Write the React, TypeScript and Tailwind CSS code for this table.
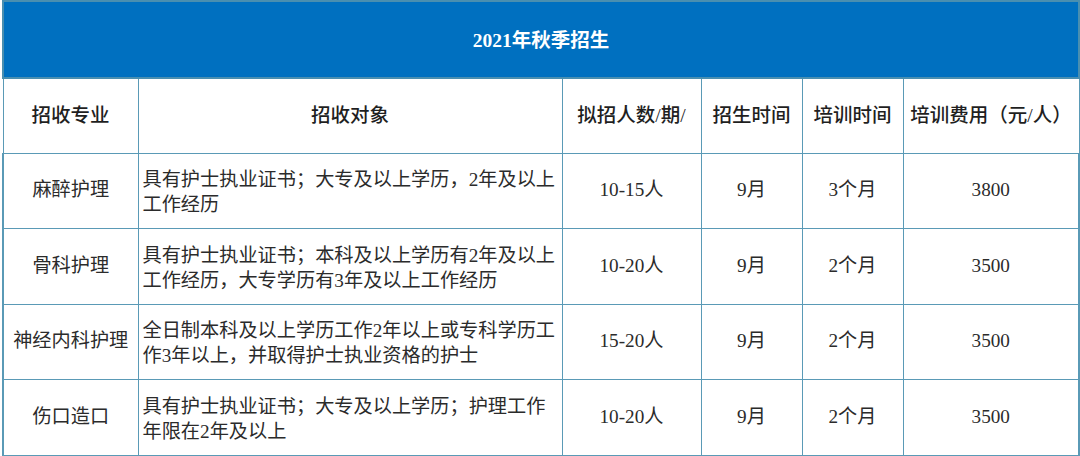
const rows = [
  {
    major: '麻醉护理',
    target: '具有护士执业证书；大专及以上学历，2年及以上工作经历',
    count: '10-15人',
    start: '9月',
    duration: '3个月',
    fee: '3800',
  },
  {
    major: '骨科护理',
    target: '具有护士执业证书；本科及以上学历有2年及以上工作经历，大专学历有3年及以上工作经历',
    count: '10-20人',
    start: '9月',
    duration: '2个月',
    fee: '3500',
  },
  {
    major: '神经内科护理',
    target: '全日制本科及以上学历工作2年以上或专科学历工作3年以上，并取得护士执业资格的护士',
    count: '15-20人',
    start: '9月',
    duration: '2个月',
    fee: '3500',
  },
  {
    major: '伤口造口',
    target: '具有护士执业证书；大专及以上学历；护理工作年限在2年及以上',
    count: '10-20人',
    start: '9月',
    duration: '2个月',
    fee: '3500',
  },
]

const headers = ['招收专业', '招收对象', '拟招人数/期/', '招生时间', '培训时间', '培训费用（元/人）']

export default function App() {
  return (
    <div className="w-[1080px] h-[456px] bg-white pl-[2px] pr-[2px] font-['Liberation_Serif','Noto_Sans_CJK_SC',serif] text-[19.2px] text-[#2b2b2b]">
      <table className="w-[1076px] table-fixed border-collapse">
        <colgroup>
          <col className="w-[135px]" />
          <col className="w-[424px]" />
          <col className="w-[139px]" />
          <col className="w-[101px]" />
          <col className="w-[101px]" />
          <col className="w-[176px]" />
        </colgroup>
        <thead>
          <tr className="h-[77px]">
            <th colSpan={6} className="bg-[#0070c0] border-2 border-[#4a8fb0] text-white font-bold text-[19.5px] align-middle pt-[2px]">
              2021年秋季招生
            </th>
          </tr>
          <tr className="h-[75px]">
            {headers.map((h) => (
              <th key={h} className="border border-[#5a9ab6] font-medium text-[19.5px] text-[#1f1f1f] text-center align-middle whitespace-nowrap px-0">
                {h}
              </th>
            ))}
          </tr>
        </thead>
        <tbody>
          {rows.map((r) => (
            <tr key={r.major} className="h-[75.5px]">
              <td className="border border-[#5a9ab6] border-l-2 text-center align-middle whitespace-nowrap">{r.major}</td>
              <td className="border border-[#5a9ab6] pl-[4px] pr-[1px] pt-[3px] leading-[25px] align-middle">{r.target}</td>
              <td className="border border-[#5a9ab6] text-center align-middle">{r.count}</td>
              <td className="border border-[#5a9ab6] text-center align-middle">{r.start}</td>
              <td className="border border-[#5a9ab6] text-center align-middle">{r.duration}</td>
              <td className="border border-[#5a9ab6] border-r-2 text-center align-middle">{r.fee}</td>
            </tr>
          ))}
        </tbody>
      </table>
    </div>
  )
}
